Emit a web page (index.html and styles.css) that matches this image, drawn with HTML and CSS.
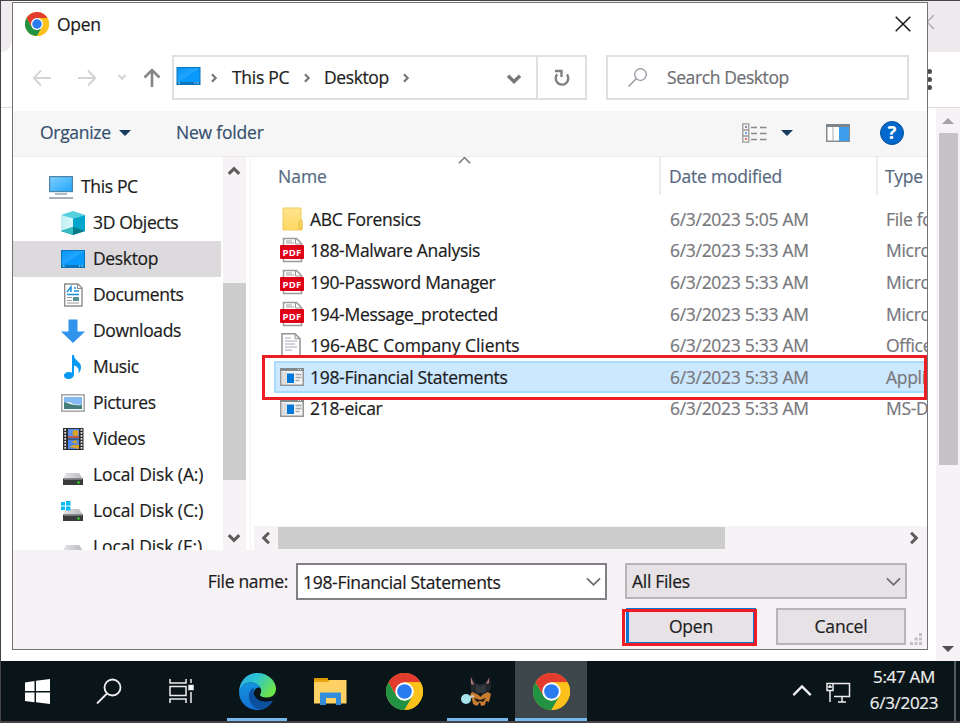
FILE: index.html
```
<!DOCTYPE html>
<html lang="en">
<head>
<meta charset="utf-8">
<title>Open</title>
<link rel="stylesheet" href="styles.css">
</head>
<body>
<svg width="0" height="0" class="defs">
  <defs>
    <linearGradient id="blue" x1="0" y1="0" x2="1" y2="1"><stop offset="0" stop-color="#0a94f5"/><stop offset=".5" stop-color="#22a5ff"/><stop offset=".52" stop-color="#0a99fb"/><stop offset="1" stop-color="#079bff"/></linearGradient>
    <linearGradient id="pc" x1="0" y1="0" x2="1" y2="1"><stop offset="0" stop-color="#7fd0ff"/><stop offset="1" stop-color="#22a5fa"/></linearGradient>
    <linearGradient id="folder" x1="0" y1="0" x2="0" y2="1"><stop offset="0" stop-color="#ffe48f"/><stop offset="1" stop-color="#ffd963"/></linearGradient>
    <linearGradient id="drv" x1="0" y1="0" x2="1" y2="0"><stop offset="0" stop-color="#e4e4e6"/><stop offset="1" stop-color="#b9bbc0"/></linearGradient>
    <linearGradient id="cube" x1="0" y1="0" x2="1" y2="0"><stop offset="0" stop-color="#c0eef2"/><stop offset="1" stop-color="#d8f8f8"/></linearGradient>
    <linearGradient id="edgeTop" x1="0" y1="0" x2="1" y2=".5"><stop offset="0" stop-color="#2ba5e8"/><stop offset=".45" stop-color="#2cc4d4"/><stop offset="1" stop-color="#6be34b"/></linearGradient>
    <linearGradient id="edgeLow" x1="0" y1="0" x2="0" y2="1"><stop offset="0" stop-color="#1594df"/><stop offset="1" stop-color="#1070d4"/></linearGradient>
    <symbol id="chrome" viewBox="0 0 48 48">
      <circle cx="24" cy="24" r="24" fill="#fbc116"/>
      <path d="M3.2 12A24 24 0 0 1 44.8 12H24L13.6 30Z" fill="#e33b2e"/>
      <path d="M3.2 12A24 24 0 0 0 24 48L34.4 30L24 36L13.6 30Z" fill="#229342"/>
      <path d="M44.8 12A24 24 0 0 1 24 48L34.4 30L34 18L24 12Z" fill="#fcc11a"/>
      <circle cx="24" cy="24" r="12" fill="#fff"/><circle cx="24" cy="24" r="9.5" fill="#2a7af0"/>
    </symbol>
    <symbol id="desk" viewBox="0 0 24 18"><rect width="24" height="18" fill="#0876bd"/><rect x="1" y="1" width="22" height="14" fill="url(#blue)"/><path d="M2 16h1.5M18 16h1.2M20.5 16h1.5" stroke="#dff" stroke-width="1.2"/></symbol>
    <symbol id="drive" viewBox="0 0 24 24"><path d="M5 8h13l4 6H2z" fill="url(#drv)"/><rect x="2" y="13.500" width="20" height="6.500" rx=".6" fill="#3a3c3c"/><rect x="3" y="14" width="18" height="1" fill="#777"/><circle cx="17.500" cy="17.500" r="1.200" fill="#28e02c"/></symbol>
    <symbol id="pdf" viewBox="0 0 24 26"><path d="M3.500 1.500h13l5 5v18h-18z" fill="#fff" stroke="#9a9a9a" stroke-width="1.500"/><path d="M15.500 1.500v5.500h6M6 4h6M6 6h8" fill="none" stroke="#9a9a9a"/><rect y="8" width="24" height="14" rx="1" fill="#e00018"/><text x="12" y="18.900" text-anchor="middle" class="pdftext">PDF</text></symbol>
    <symbol id="app" viewBox="0 0 24 18"><rect x=".75" y=".75" width="22.500" height="16.500" fill="#f4f4f4" stroke="#929699" stroke-width="1.500"/><path d="M0 1.500h24" stroke="#84898c" stroke-width="3"/><path d="M18 1.500h1M20 1.500h1" stroke="#eee"/><rect x="2" y="4" width="5" height="12" fill="#ddd"/><rect x="7" y="5.500" width="7" height="9.500" fill="#0078d7"/><path d="M15.500 6.500h6M15.500 9.500h6M15.500 12.500h4" stroke="#a8a8a8" stroke-width="1.300"/></symbol>
    <symbol id="chev" viewBox="0 0 12 12"><path d="M1.500 3.500L6 8l4.500-4.500" fill="none" stroke="currentColor" stroke-width="2.600"/></symbol>
    <symbol id="thin" viewBox="0 0 12 12"><path d="M.8 3.500L6 8.700l5.200-5.200" fill="none" stroke="currentColor" stroke-width="1.400"/></symbol>
  </defs>
</svg>

<div class="screen">
  <div class="browser">
    <div class="tabs"><i></i><svg width="10" height="20"><path d="M9 4L2 11l7 7" fill="none" stroke="#aaa8ab" stroke-width="1.300"/></svg></div>
    <div class="tools"><b></b><b></b><b></b></div>
    <div class="page">
      <div class="vscroll"><span class="up"></span><span class="vthumb"></span><span class="down"></span></div>
    </div>
  </div>

  <div class="dialog">
    <header class="title"><svg width="24" height="24"><use href="#chrome"/></svg><span>Open</span>
      <svg class="close" width="16" height="16"><path d="M.7.7l14.600 14.600M15.300.7L.7 15.300" stroke="#161616" stroke-width="1.500"/></svg></header>
    <nav class="nav">
      <div class="arrows">
        <svg width="110" height="24" viewBox="0 0 110 24" fill="none" stroke="#d4d4d4" stroke-width="2"><path d="M1 12h17M8 4.500L.8 12 8 19.500M45 12h17M55 4.500l7.200 7.500-7.200 7.500M85.500 9l3.500 3.800L92.500 9"/></svg>
        <svg width="18" height="20" fill="none" stroke="#858585" stroke-width="2.600"><path d="M9 19V2M1.500 9.500L9 2l7.500 7.500"/></svg>
      </div>
      <div class="address">
        <div class="crumbs"><svg width="25" height="18" preserveAspectRatio="none"><use href="#desk"/></svg><svg class="c1" width="10" height="10"><use href="#chev"/></svg><span class="t1">This PC</span><svg class="c2" width="10" height="10"><use href="#chev"/></svg><span class="t2">Desktop</span><svg class="c3" width="10" height="10"><use href="#chev"/></svg><svg class="drop" width="16" height="16"><use href="#chev"/></svg></div>
        <div class="refresh"><svg width="16" height="18" fill="none" stroke="#808080" stroke-width="2.400"><path d="M3.200 5.200A6.300 6.300 0 1 0 13 5.500"/><path d="M1 2h6.500v6"/></svg></div>
      </div>
      <div class="search"><svg width="22" height="22" fill="none" stroke="#9295a0" stroke-width="1.300"><circle cx="13.500" cy="7.500" r="5.800"/><path d="M9.500 11.500L1.500 19.500"/></svg><span>Search Desktop</span></div>
    </nav>
    <div class="toolbar">
      <span class="org">Organize</span><i class="tri"></i><span class="new">New folder</span>
      <svg class="view" width="25" height="20" fill="none"><path d="M.8.8h6v18.400h-6zM.8 7h6M.8 13h6" stroke="#999" stroke-width="1.300"/><path d="M9 4.500h6M18 4.500h6.500M9 10.500h6M18 10.500h6.500M9 16.500h6M18 16.500h6.500" stroke="#888" stroke-width="1.400"/><path d="M3 4h2" stroke="#668" stroke-width="1.500"/><path d="M3 10h2" stroke="#38f" stroke-width="1.500"/><path d="M3 16h2" stroke="#e43" stroke-width="1.500"/></svg>
      <i class="tri tri2"></i>
      <svg class="pane" width="24" height="18"><rect x=".75" y=".75" width="22.500" height="16.500" fill="#fff" stroke="#868b90" stroke-width="1.500"/><path d="M0 1.500h24" stroke="#7d848a" stroke-width="3"/><path d="M7 3v14" stroke="#aaa"/><rect x="13" y="3" width="10" height="14" fill="#3d9eee"/></svg>
      <span class="help">?</span>
    </div>
    <main class="body">
      <aside class="tree">
        <div class="node root"><svg width="24" height="24"><rect x=".6" y="1.600" width="22.800" height="15" fill="url(#pc)" stroke="#4b84a8" stroke-width="1.200"/><path d="M6 19h12" stroke="#9baab8" stroke-width="1.600"/><path d="M0 23h24" stroke="#a5b0bf" stroke-width="2"/></svg><span>This PC</span></div>
        <div class="node"><svg width="24" height="24"><path d="M0 4L12 7v17L0 20z" fill="url(#cube)"/><path d="M0 4L12 0l12 4-12 3.500z" fill="#54cfdd"/><path d="M12 7.500L24 4v16l-12 4z" fill="#02a5cb"/><path d="M0 20l12-4v8zM12 16l12 4-12 4z" fill="#087a87"/><path d="M0 20l12-4v8z" fill="#35bdc6"/></svg><span>3D Objects</span></div>
        <div class="node selected"><svg width="24" height="18"><use href="#desk"/></svg><span>Desktop</span></div>
        <div class="node"><svg width="24" height="24"><path d="M3.700 1h13.300l4 4v18H3.700z" fill="#fff" stroke="#8d8d8d" stroke-width="1.400"/><path d="M16.500 1v4.500H21" fill="none" stroke="#8d8d8d"/><path d="M6 9l4-5v5M13 5h2M13 8h5M6 11.500h12" stroke="#1991df" stroke-width="1.500" fill="none"/><path d="M6 14.500h5M6 17.500h5M6 20h12" stroke="#999"/><rect x="12" y="14" width="6" height="4" fill="#5c9090"/></svg><span>Documents</span></div>
        <div class="node"><svg width="24" height="24"><path d="M7.500.5h9v12H24L12 24 0 12.500h7.500z" fill="#3193eb"/></svg><span>Downloads</span></div>
        <div class="node"><svg width="24" height="24"><path d="M11 0h2c0 6 7 6 7 12 0 3-1 5-2.500 6.500 1-4-.5-7-4.500-8V19c0 3-2.500 5-5.500 5S3 22.500 3 20.500 5.500 17 8 17c1 0 2 .2 3 .6z" fill="#0899f4"/></svg><span>Music</span></div>
        <div class="node"><svg width="24" height="18"><rect x=".8" y=".8" width="22.400" height="16.400" fill="#fff" stroke="#aaa" stroke-width="1.600"/><rect x="3" y="3" width="18" height="12" fill="#84baf4"/><path d="M3 9c3-2 7-1 9 1l9 1v1H3z" fill="#f0f8ff"/><path d="M3 8c5 1 8 4 18 3v4H3z" fill="#457f7b"/></svg><span>Pictures</span></div>
        <div class="node"><svg width="24" height="24"><rect x="2" y="1" width="20.500" height="22" fill="#2e2e32"/><rect x="7" y="2" width="11" height="9.500" fill="#5a8ff0"/><rect x="7" y="12.500" width="11" height="9.500" fill="#4787f1"/><circle cx="14.500" cy="6" r="3" fill="#d9a420"/><path d="M7 9h11v2H7z" fill="#b65c50"/><path d="M10 15l5-2 2 4zM8 20l4-2h6v4z" fill="#d8a22c"/><path d="M4.200 2v20M20.500 2v20" stroke="#eee" stroke-width="1.700" stroke-dasharray="1.700 1.300"/></svg><span>Videos</span></div>
        <div class="node disk"><svg width="24" height="24"><use href="#drive"/></svg><span>Local Disk (A:)</span></div>
        <div class="node disk"><svg width="24" height="24"><use href="#drive"/><path d="M0 1h4v3.500H0zM5 0h4.500v4.500H5zM0 5.500h4V9H0zM5 5.500h4.500v4H5z" fill="#08bbf4"/></svg><span>Local Disk (C:)</span></div>
        <div class="node disk"><svg width="24" height="24"><use href="#drive"/></svg><span>Local Disk (E:)</span></div>
      </aside>
      <div class="treebar"><svg class="flip" width="14" height="14"><use href="#chev"/></svg><i></i><svg width="14" height="14"><use href="#chev"/></svg></div>
      <section class="files">
        <div class="head"><span class="name">Name</span><svg class="flip sort" width="13" height="13"><use href="#thin"/></svg><span class="date">Date modified</span><span class="type">Type</span></div>
        <div class="list">
          <div class="row"><svg width="24" height="26"><path d="M3 2h18v14h1v8H3z" fill="url(#folder)" stroke="#edcc60"/><path d="M19 23v-7q0-2 3-2v9z" fill="#fbd75a" stroke="#e5bd4c"/></svg><span class="name">ABC Forensics</span><span class="date">6/3/2023 5:05 AM</span><span class="type">File folder</span></div>
          <div class="row"><svg width="24" height="26"><use href="#pdf"/></svg><span class="name">188-Malware Analysis</span><span class="date">6/3/2023 5:33 AM</span><span class="type">Microsoft</span></div>
          <div class="row"><svg width="24" height="26"><use href="#pdf"/></svg><span class="name">190-Password Manager</span><span class="date">6/3/2023 5:33 AM</span><span class="type">Microsoft</span></div>
          <div class="row"><svg width="24" height="26"><use href="#pdf"/></svg><span class="name">194-Message_protected</span><span class="date">6/3/2023 5:33 AM</span><span class="type">Microsoft</span></div>
          <div class="row"><svg width="24" height="26"><path d="M2 1.700h13l5 5v17.600H2z" fill="#fff" stroke="#929292" stroke-width="1.500"/><path d="M15 1.700v5h5" fill="none" stroke="#929292"/><path d="M5 6h6M5 9h12M5 12h10M5 15h12M5 18h7" stroke="#aaa7bc"/></svg><span class="name wide">196-ABC Company Clients</span><span class="date">6/3/2023 5:33 AM</span><span class="type">Office</span></div>
          <div class="row chosen"><svg width="24" height="18"><use href="#app"/></svg><span class="name">198-Financial Statements</span><span class="date">6/3/2023 5:33 AM</span><span class="type">Application</span></div>
          <div class="row"><svg width="24" height="18"><use href="#app"/></svg><span class="name">218-eicar</span><span class="date">6/3/2023 5:33 AM</span><span class="type">MS-DOS</span></div>
        </div>
        <div class="hbar"><svg class="left" width="14" height="14"><use href="#chev"/></svg><i></i><svg class="right" width="14" height="14"><use href="#chev"/></svg></div>
      </section>
    </main>
    <footer class="foot">
      <div class="line"><label>File name:</label><div class="field"><span>198-Financial Statements</span><svg width="15" height="15"><use href="#thin"/></svg></div><div class="filter"><span>All Files</span><svg width="15" height="15"><use href="#thin"/></svg></div></div>
      <div class="buttons"><button class="open">Open</button><button class="cancel">Cancel</button></div>
      <svg class="grip" width="12" height="12" fill="#c2bfc3"><path d="M9 0h3v3H9zM4.500 4.500h3v3h-3zM9 4.500h3v3H9zM0 9h3v3H0zM4.500 9h3v3h-3zM9 9h3v3H9z"/></svg>
    </footer>
    <div class="mark markrow"></div><div class="mark markopen"></div>
  </div>

  <div class="taskbar">
    <div class="task"><svg width="25" height="25" fill="#fff"><path d="M0 3.500L9.500 2v10H0zM11 1.700L25 0v12H11zM0 13.500h9.500v9.800L0 22zM11 13.500h14V25l-14-1.700z"/></svg></div>
    <div class="task"><svg width="26" height="26" fill="none" stroke="#eee" stroke-width="1.800"><circle cx="16.500" cy="9.500" r="8"/><path d="M11 15.500L1 25.500"/></svg></div>
    <div class="task"><svg width="25" height="24" fill="none" stroke="#eee" stroke-width="1.500"><path d="M1 0v4h16V0M1 7.500h16v9H1zM1 24v-4h16v4M22 0v4M22 13v11"/><rect x="20" y="6.500" width="4" height="4" fill="#fff"/></svg></div>
    <div class="task run edge"><svg width="37" height="37" viewBox="0 0 37 37"><path d="M0 20C0 8 8 0 18.500 0S37 8 37 15.500c0 6-4 9-9 9-4 0-7-1.300-7-2.700 0-.8 1.200-1.600 1.200-3.800 0-4-4-8.500-10.500-8.500S1 14 0 20z" fill="url(#edgeTop)"/><path d="M0 19C1.500 12 7 9.500 12 9.500c5 0 8.500 2.500 9.500 5.500-3-1.500-7 1-7 6 0 8 10 12 18 8.500C29.500 34 24.500 37 18.500 37 8 37 0 29 0 19z" fill="url(#edgeLow)"/><path d="M15 14.500c-4 2-6 6-5 11 1.500 7 7 11 11 11 5-.7 10-3.500 13-8.500-1 .2-1-.3-2.500 0C22 31 12 25 15 14.500z" fill="#0c519f"/></svg></div>
    <div class="task folder"><svg width="33" height="28"><path d="M0 1h14v4H0z" fill="#dc9600"/><path d="M0 3h32.500v23.500H0z" fill="#fdd164"/><path d="M0 5h14l2-2H0z" fill="#eaa60e"/><path d="M6 28V16.500q0-1 1-1h19q1 0 1 1V28h-5v-7H12v7z" fill="#348ddb"/></svg></div>
    <div class="task"><svg width="37" height="37"><use href="#chrome"/></svg></div>
    <div class="task run"><svg width="34" height="34"><path d="M9 2l7 8h7l6-8 1 12-3 5 2 4-6 4H14l-3-5-1-5z" fill="#22282e"/><path d="M10 3l3 8-3-1zM28 4l-3 6 3-1z" fill="#b87876"/><path d="M11 18l7 3h3l6-3 3 2-2 8-3-1-1 4-4 1-1-4-3 4-4-2-1-5-2-4z" fill="#c77c30"/><path d="M15 10l4 3 5-3 1 7-5 5-5-5z" fill="#323a40"/><path d="M16 19h6l-2.500 4zM13 24l6 2 6-2-3 4-3-1-3 1z" fill="#161719"/><circle cx="5" cy="25" r="5" fill="#a6e4ea"/><path d="M9 23l4-1" stroke="#ccc" stroke-width="2"/></svg></div>
    <div class="task run active"><svg width="37" height="37"><use href="#chrome"/></svg></div>
    <div class="tray"><svg class="flip" width="20" height="20"><use href="#thin"/></svg><svg width="25" height="22" fill="none" stroke="#eee" stroke-width="1.500"><path d="M7.500 1.500h16v13H8M12 20h8M16 14.500V20M4 9v11"/><rect x="1" y="1.500" width="6" height="7"/><path d="M2 5h4M4 3v3"/></svg><div class="clock"><span>5:47 AM</span><span>6/3/2023</span></div><i></i></div>
  </div>
</div>
</body>
</html>
```
FILE: styles.css
```
* { box-sizing: border-box; }
body { margin: 0; font-family: "Open Sans", "Noto Sans", sans-serif; font-size: 17.5px; letter-spacing: -.3px; color: #1b1b1b; line-height: 24px; -webkit-text-stroke: .2px; }
svg { display: block; flex: none; }
.defs { position: absolute; }
span, label { white-space: nowrap; flex: none; }
.title span, .crumbs span, .search span, .org, .new, .node span { line-height: 22px; padding-bottom: 2px; }
.pdftext { font: bold 9.5px "Open Sans", sans-serif; fill: #fff; letter-spacing: .2px; -webkit-text-stroke: 0; }
.flip { transform: rotate(180deg); }
.screen { position: relative; width: 960px; height: 723px; overflow: hidden; background: #fff; border: solid #454345; border-width: 1px 0 2px 1px; display: flex; flex-direction: column; }
.browser { height: 660px; flex: none; display: flex; flex-direction: column; }
.tabs { height: 51px; background: #eee9ed; display: flex; justify-content: space-between; padding: 10px 25px 0 0; }
.tabs { background: linear-gradient(90deg, #fff 50%, #eee9ed 50%); }
.tabs i { width: 11px; margin-top: -10px; background: #f0ebef; border-radius: 0 0 11px 0; }
.tools { height: 56px; background: #fff; border-bottom: 1px solid #dcdadc; padding: 17px 28px 0 0; display: flex; flex-direction: column; align-items: flex-end; gap: 3px; }
.tools b { width: 5px; height: 5px; border-radius: 50%; background: #4c4c4e; }
.page { flex: 1; display: flex; justify-content: flex-end; }
.vscroll { width: 24px; background: #f6f2f6; display: flex; flex-direction: column; align-items: center; padding: 10px 0 9px; }
.up, .down { width: 0; height: 0; border: solid transparent; border-width: 0 6px; }
.up { border-bottom: 6px solid #a5a3a5; }
.down { border-top: 6px solid #505052; margin-top: auto; }
.vthumb { width: 19px; height: 332px; margin-top: 9px; background: #c4c2c5; }
.dialog { position: absolute; left: 11px; top: 1px; width: 916px; height: 648px; border: 1px solid #747274; background: #fff; display: flex; flex-direction: column; overflow: hidden; }
.title { height: 52px; flex: none; display: flex; padding: 9px 16px 0 12px; }
.title span { margin: 1px 0 0 8px; }
.title .close { margin: 4px 0 0 auto; }
.nav { height: 56px; flex: none; display: flex; align-items: flex-start; }
.arrows { width: 159px; height: 45px; padding-left: 20px; display: flex; align-items: center; }
.address { width: 415px; height: 45px; border: 2px solid #e0e0e0; display: flex; }
.crumbs { width: 362px; display: flex; align-items: center; padding-left: 2px; color: #777; }
.crumbs > svg:first-child { margin-top: -3px; }
.crumbs span { color: #222; }
.c1, .c2, .c3 { transform: rotate(-90deg); }
.c1 { margin-left: 8px; }
.t1 { width: 58px; margin-left: 13px; }
.c2 { margin-left: 12px; }
.t2 { width: 64px; margin-left: 12px; letter-spacing: -.4px; }
.c3 { margin-left: 13px; }
.drop { margin: 3px 14px 0 auto; }
.refresh { flex: 1; border-left: 2px solid #e0e0e0; display: flex; align-items: center; justify-content: center; }
.search { width: 303px; height: 45px; margin-left: 19px; border: 2px solid #e0e0e0; display: flex; align-items: center; padding-left: 19px; color: #6e6e73; letter-spacing: -.4px; }
.search span { margin-left: 18px; }
.toolbar { height: 46px; flex: none; background: #f6f6f6; border-bottom: 1px solid #eee9ed; display: flex; align-items: center; color: #35506f; padding: 0 0 2px 27px; }
.org { width: 71px; letter-spacing: -.3px; }
.tri { margin-left: 8px; border: 6px solid transparent; border-bottom: 0; border-top-color: #173a5e; }
.new { margin-left: 45px; width: 88px; letter-spacing: -.2px; }
.view { margin-left: 478px; }
.tri2 { margin-left: 14px; }
.pane { margin-left: 33px; }
.help { width: 24px; height: 24px; margin-left: 30px; border-radius: 50%; border: 1px solid #07509a; background: #0067cd; color: #fff; font-weight: 700; font-size: 18px; line-height: 21px; text-align: center; }
.body { height: 393px; flex: none; display: flex; overflow: hidden; }
.tree { width: 208px; padding-top: 12px; overflow: hidden; }
.node { height: 36px; padding-left: 48px; display: flex; align-items: center; gap: 8px; letter-spacing: -.35px; }
.disk { letter-spacing: -.1px; }
.disk svg { margin-top: 3px; }
.root { padding-left: 36px; }
.selected { background: #dddadd; }
.treebar { width: 23px; margin-left: 2px; background: #f6f2f6; color: #5c5c5c; display: flex; flex-direction: column; align-items: flex-start; padding: 7px 0 5px; }
.treebar svg { margin-left: 4px; }
.treebar i { width: 22.5px; height: 197px; margin: 105px 0 auto; background: #cdcdcd; }
.files { flex: 1; min-width: 0; margin-left: 4px; border-left: 1px solid #f4f2f5; display: flex; flex-direction: column; }
.head { height: 38px; flex: none; display: flex; color: #56687f; line-height: 38px; padding-left: 27px; }
.head .name { width: 180px; letter-spacing: 0; }
.sort { margin-top: -3px; color: #777; }
.head .date { width: 217px; margin-left: 188px; padding-left: 8px; border-left: 2px solid #ececef; letter-spacing: -.2px; }
.head .type { width: 60px; padding-left: 7px; border-left: 2px solid #ececef; letter-spacing: -.3px; }
.list { flex: 1; padding: 8px 0 0 23px; overflow: hidden; }
.row { height: 31.600px; width: 720px; display: flex; align-items: center; padding-left: 6px; }
.row .name { width: 360px; margin-left: 6px; }
.row .wide { letter-spacing: -.05px; }
.row .date { width: 216px; color: #77777c; }
.row .type { color: #77777c; }
.chosen { background: #cce8ff; box-shadow: inset 0 0 0 2px #abdaff; }
.hbar { height: 24px; flex: none; margin-left: 3px; background: #f6f2f6; color: #5c5c5c; display: flex; align-items: center; }
.hbar i { width: 447px; height: 22px; margin: 0 auto 1px 5px; background: #cdcdcd; }
.hbar svg { margin-bottom: 1px; }
.left { margin-left: 5px; transform: rotate(90deg); }
.right { margin-right: 6px; transform: rotate(-90deg); }
.foot { position: relative; flex: 1; background: #f6f2f6; padding-top: 13px; }
.line { display: flex; }
label { width: 275px; text-align: right; line-height: 36px; }
.field, .filter { display: flex; align-items: center; justify-content: space-between; padding: 0 4px 0 5px; }
.field svg, .filter svg { color: #6c6a6e; }
.field { width: 311px; height: 37px; margin-left: 8px; background: #fff; border: 2px solid #828084; }
.filter { width: 282px; height: 36px; margin-left: 18px; background: #e6e2e5; border: 2px solid #b6b4b8; }
.buttons { display: flex; margin: 8px 0 0 613px; gap: 20px; }
button { width: 130px; height: 37px; padding: 0 0 2px; border: 2px solid #b7b5b9; background: #e6e2e5; font: inherit; letter-spacing: -.2px; color: #222; }
.open { width: 130px; border: 3px solid #0c76d0; }
.grip { position: absolute; right: 5px; bottom: 4px; }
.mark { position: absolute; border: 3px solid #ee1c25; }
.markrow { left: 249px; top: 352px; width: 665px; height: 45px; }
.markopen { left: 609px; top: 606px; width: 135px; height: 37px; }
.taskbar { height: 60px; flex: none; background: #0a151a; display: flex; }
.task { width: 72px; display: flex; align-items: center; justify-content: center; }
.edge { margin-left: 4px; }
.task:nth-child(5) { width: 75px; }
.task:nth-child(6) { width: 73px; }
.task:nth-child(7) { width: 73px; }
.task:nth-child(8) { width: 72px; margin-left: 1px; }
.run { position: relative; }
.run::after { content: ""; position: absolute; left: 6px; right: 6px; bottom: 0; height: 3px; background: #76b9ed; }
.active { background: #3c464b; }
.active::after { left: 0; right: 0; }
.tray { flex: 1; display: flex; align-items: center; color: #f0f0f0; }
.tray > .flip { margin-left: 205px; }
.tray > svg:nth-child(2) { margin: 3px 0 0 14px; }
.clock { width: 80px; margin: -3px 0 0 13px; display: flex; flex-direction: column; align-items: center; line-height: 26px; font-size: 17px; }
.tray i { align-self: stretch; margin-left: auto; width: 6px; border-left: 2px solid #515a5f; }
```
